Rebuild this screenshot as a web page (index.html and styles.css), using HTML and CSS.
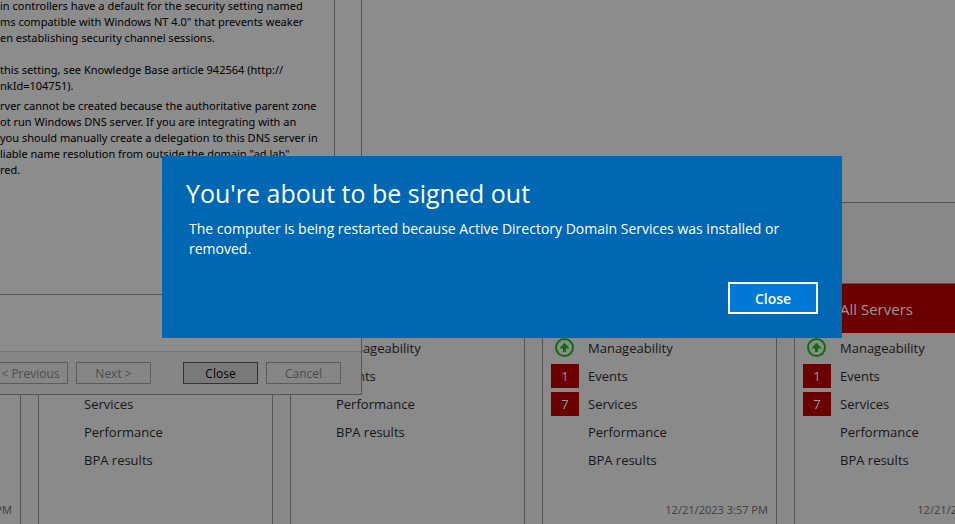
FILE: index.html
```html
<!DOCTYPE html>
<html lang="en">
<head>
<meta charset="utf-8">
<title>Server Manager</title>
<link rel="stylesheet" href="styles.css">
</head>
<body>
<main class="dashboard">
  <section class="welcome"></section>
  <section class="tiles">
    <article class="tile">
      <header class="tile-head"></header>
      <time class="stamp">12/21/2023 3:57 PM</time>
    </article>
    <article class="tile">
      <header class="tile-head"></header>
      <ul class="rows">
        <li class="row"><span class="mark"></span></li>
        <li class="row"><span class="mark"></span></li>
        <li class="row"><span class="mark"></span>Services</li>
        <li class="row"><span class="mark"></span>Performance</li>
        <li class="row"><span class="mark"></span>BPA results</li>
      </ul>
    </article>
    <article class="tile">
      <header class="tile-head"></header>
      <ul class="rows">
        <li class="row"><span class="mark"></span>Manageability</li>
        <li class="row"><span class="mark"></span>Events</li>
        <li class="row"><span class="mark"></span>Performance</li>
        <li class="row"><span class="mark"></span>BPA results</li>
      </ul>
    </article>
    <article class="tile">
      <header class="tile-head alert"></header>
      <ul class="rows">
        <li class="row"><span class="mark"><svg class="up" viewBox="0 0 20 20" aria-hidden="true"><circle cx="9.5" cy="9.5" r="8.5"/><path d="M9.5 4.8 13.8 9.2V10.4H11V14H8V10.4H5.2V9.2Z"/></svg></span>Manageability</li>
        <li class="row"><span class="mark count">1</span>Events</li>
        <li class="row"><span class="mark count">7</span>Services</li>
        <li class="row"><span class="mark"></span>Performance</li>
        <li class="row"><span class="mark"></span>BPA results</li>
      </ul>
      <time class="stamp">12/21/2023 3:57 PM</time>
    </article>
    <article class="tile">
      <header class="tile-head alert">All Servers</header>
      <ul class="rows">
        <li class="row"><span class="mark"><svg class="up" viewBox="0 0 20 20" aria-hidden="true"><circle cx="9.5" cy="9.5" r="8.5"/><path d="M9.5 4.8 13.8 9.2V10.4H11V14H8V10.4H5.2V9.2Z"/></svg></span>Manageability</li>
        <li class="row"><span class="mark count">1</span>Events</li>
        <li class="row"><span class="mark count">7</span>Services</li>
        <li class="row"><span class="mark"></span>Performance</li>
        <li class="row"><span class="mark"></span>BPA results</li>
      </ul>
      <time class="stamp">12/21/2023 3:57 PM</time>
    </article>
  </section>
</main>

<section class="wizard">
  <div class="wizard-body">
    <div class="results">
      <p>in controllers have a default for the security setting named<br>ms compatible with Windows NT 4.0" that prevents weaker<br>en establishing security channel sessions.</p>
      <p class="spaced">this setting, see Knowledge Base article 942564 (http://<br>nkId=104751).</p>
      <p class="next">rver cannot be created because the authoritative parent zone<br>ot run Windows DNS server. If you are integrating with an<br>you should manually create a delegation to this DNS server in<br>liable name resolution from outside the domain "ad.lab"<br>red.</p>
    </div>
  </div>
  <footer class="wizard-foot">
    <button class="btn" type="button" disabled>&lt; Previous</button>
    <button class="btn" type="button" disabled>Next &gt;</button>
    <button class="btn primary" type="button">Close</button>
    <button class="btn" type="button" disabled>Cancel</button>
  </footer>
</section>

<section class="dialog" role="dialog" aria-labelledby="dialog-title">
  <h1 id="dialog-title">You're about to be signed out</h1>
  <p>The computer is being restarted because Active Directory Domain Services was installed or removed.</p>
  <button class="dialog-btn" type="button">Close</button>
</section>
</body>
</html>
```
FILE: styles.css
```css
* {
  box-sizing: border-box;
}

body {
  margin: 0;
  height: 100vh;
  overflow: hidden;
  position: relative;
  background: #888;
  color: #161616;
  font-family: "Open Sans", "Noto Sans", sans-serif;
  font-size: 13px;
}

h1,
p,
ul {
  margin: 0;
  padding: 0;
}

.dashboard {
  height: 100%;
  overflow: hidden;
  display: flex;
  flex-direction: column;
  gap: 80px;
}

.welcome {
  flex: none;
  height: 203px;
  background: #8c8c8c;
  border-bottom: 1px solid #555;
}

/* The strip is scrolled one tile to the left. */
.tiles {
  flex: 1;
  display: flex;
  gap: 17px;
  margin-left: -214px;
}

.tile {
  flex: none;
  width: 235px;
  display: flex;
  flex-direction: column;
  background: #8a8a8a;
  border: 1px solid #555;
  border-bottom: 0;
}

.tile-head {
  height: 49px;
  padding-left: 45px;
  font-size: 15px;
  line-height: 50px;
}

.alert {
  background: #6a0000;
  color: #999;
}

.rows {
  list-style: none;
  padding: 1px 8px 0;
}

.row {
  height: 28px;
  display: flex;
  align-items: center;
  gap: 9px;
}

.mark {
  width: 28px;
  height: 24px;
  display: flex;
  align-items: center;
  justify-content: center;
}

.count {
  background: #6a0000;
  color: #999;
}

.up {
  width: 20px;
  height: 20px;
  fill: #0b700b;
}

.up circle {
  fill: none;
  stroke: #0b700b;
  stroke-width: 2;
}

.stamp {
  margin-top: auto;
  padding: 0 8px 4px;
  text-align: right;
  font-family: "Noto Sans", sans-serif;
  font-size: 11px;
  line-height: 20px;
  color: #444;
}

.wizard {
  position: absolute;
  top: 0;
  left: 0;
  width: 362px;
  background: #8c8c8c;
  border: solid #555;
  border-width: 0 1px 1px 0;
  color: #000;
  font-size: 12px;
  white-space: nowrap;
}

.wizard-body {
  overflow: hidden;
  padding: 0 26px 56px 0;
}

/* The message list is scrolled slightly past its top edge. */
.results {
  height: 297px;
  margin-top: -2px;
  border: solid #555;
  border-width: 0 1px 1px 0;
  font-family: "Noto Sans", sans-serif;
  font-size: 11px;
  line-height: 16px;
}

.results p {
  overflow: hidden;
}

.results .spaced {
  padding-top: 16px;
}

.results .next {
  padding-top: 4px;
}

.wizard-foot {
  display: flex;
  justify-content: flex-end;
  gap: 8px;
  padding: 10px 20px;
  border-top: 1px solid #777;
  background: #868686;
}

.btn {
  flex: none;
  width: 75px;
  height: 22px;
  padding: 0;
  border: 1px solid #5c5c5c;
  background: #868686;
  color: #4c4c4c;
  font: inherit;
}

.primary {
  margin-left: 24px;
  border-color: #333;
  background: #797979;
  color: #000;
}

.dialog {
  position: absolute;
  top: 156px;
  left: 162px;
  width: 680px;
  padding: 20px 24px 24px;
  display: flex;
  flex-direction: column;
  background: #0067b3;
  color: #fff;
}

.dialog h1 {
  font-size: 25px;
  font-weight: 400;
  line-height: 35px;
}

.dialog p {
  padding: 8px 32px 0 3px;
  font-size: 14px;
  line-height: 20px;
}

.dialog-btn {
  align-self: flex-end;
  width: 90px;
  height: 32px;
  margin-top: 23px;
  border: 2px solid #fff;
  background: #0078d7;
  color: #fff;
  font: 600 14px "Open Sans", sans-serif;
}
```
